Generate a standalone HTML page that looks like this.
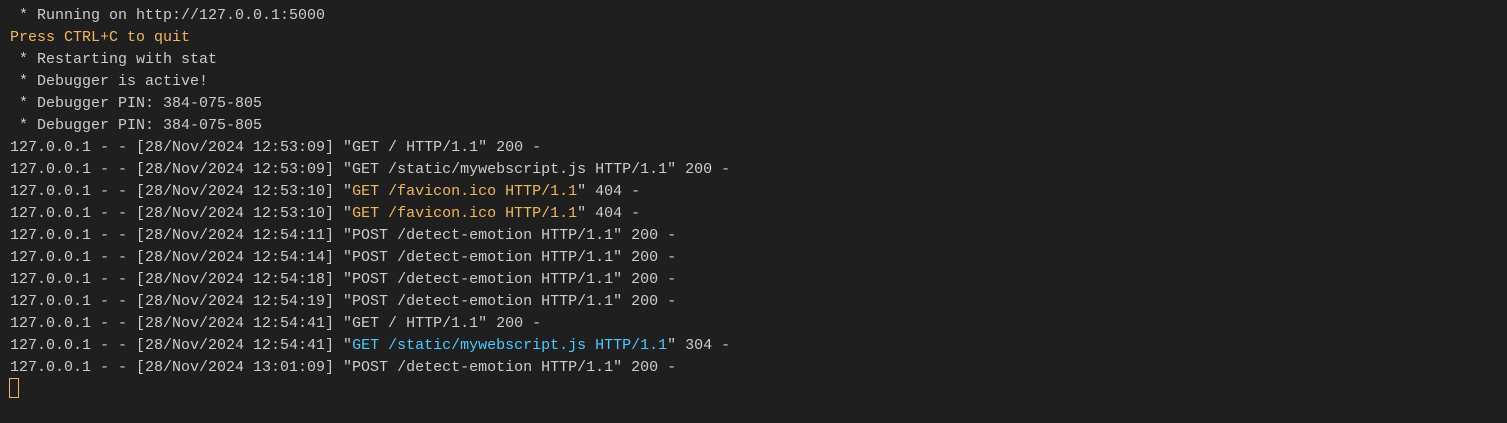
<!DOCTYPE html>
<html><head><style>
html,body{margin:0;padding:0;background:#1f1f1f;width:1507px;height:423px;overflow:hidden}
pre{margin:0;position:absolute;left:10px;top:-17px;font-family:"Liberation Mono",monospace;font-size:15px;line-height:22px;color:#cccccc;white-space:pre}
.y{color:#f2b65e}.b{color:#4ec9ff}.r{color:#f14c4c}
.cur{position:absolute;left:9px;top:378px;width:8px;height:18px;border:1px solid #f2b65e}
</style></head><body>
<pre><span class="r">WARNING: This is a development server. Do not use it in a production deployment. Use a production WSGI server instead.</span>
 * Running on http://127.0.0.1:5000
<span class="y">Press CTRL+C to quit</span>
 * Restarting with stat
 * Debugger is active!
 * Debugger PIN: 384-075-805
 * Debugger PIN: 384-075-805
127.0.0.1 - - [28/Nov/2024 12:53:09] "GET / HTTP/1.1" 200 -
127.0.0.1 - - [28/Nov/2024 12:53:09] "GET /static/mywebscript.js HTTP/1.1" 200 -
127.0.0.1 - - [28/Nov/2024 12:53:10] "<span class="y">GET /favicon.ico HTTP/1.1</span>" 404 -
127.0.0.1 - - [28/Nov/2024 12:53:10] "<span class="y">GET /favicon.ico HTTP/1.1</span>" 404 -
127.0.0.1 - - [28/Nov/2024 12:54:11] "POST /detect-emotion HTTP/1.1" 200 -
127.0.0.1 - - [28/Nov/2024 12:54:14] "POST /detect-emotion HTTP/1.1" 200 -
127.0.0.1 - - [28/Nov/2024 12:54:18] "POST /detect-emotion HTTP/1.1" 200 -
127.0.0.1 - - [28/Nov/2024 12:54:19] "POST /detect-emotion HTTP/1.1" 200 -
127.0.0.1 - - [28/Nov/2024 12:54:41] "GET / HTTP/1.1" 200 -
127.0.0.1 - - [28/Nov/2024 12:54:41] "<span class="b">GET /static/mywebscript.js HTTP/1.1</span>" 304 -
127.0.0.1 - - [28/Nov/2024 13:01:09] "POST /detect-emotion HTTP/1.1" 200 -</pre>
<div class="cur"></div>
</body></html>
